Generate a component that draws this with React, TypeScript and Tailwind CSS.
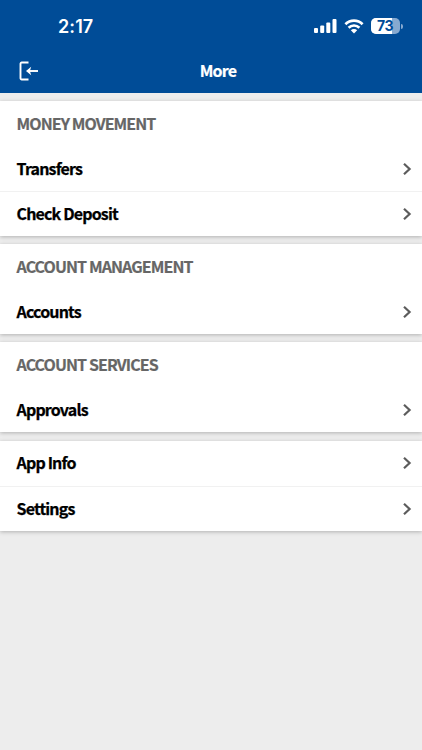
import React from 'react';

interface MenuSection {
  title?: string;
  items: string[];
}

const sections: MenuSection[] = [
  { title: 'MONEY MOVEMENT', items: ['Transfers', 'Check Deposit'] },
  { title: 'ACCOUNT MANAGEMENT', items: ['Accounts'] },
  { title: 'ACCOUNT SERVICES', items: ['Approvals'] },
  { items: ['App Info', 'Settings'] },
];

function StatusBar() {
  return (
    <div className="flex h-[52px] items-center justify-between pl-[58px] pr-[19px] font-['Inter',sans-serif] text-white">
      <span className="pt-px text-[18px] font-semibold leading-none tracking-[0.1px]">2:17</span>
      <div className="flex items-center">
        {/* Signal */}
        <svg width="23" height="14" viewBox="0 0 23 14" fill="currentColor">
          <rect x="0" y="9" width="4" height="5" rx="1" />
          <rect x="6.2" y="6.5" width="4" height="7.5" rx="1" />
          <rect x="12.3" y="3.5" width="4" height="10.5" rx="1" />
          <rect x="18.5" y="0" width="4" height="14" rx="1" />
        </svg>
        {/* Wi-Fi */}
        <svg className="ml-[7px]" width="20" height="15" viewBox="0 0 20 15" fill="none" stroke="currentColor" strokeWidth="2.7">
          <path d="M1.4 5.2a12.3 12.3 0 0 1 17.2 0" />
          <path d="M4.6 8.7a7.7 7.7 0 0 1 10.8 0" />
          <path d="M10 14.4 6.8 11.3a4.5 4.5 0 0 1 6.4 0z" fill="currentColor" stroke="none" />
        </svg>
        {/* Battery */}
        <div className="relative ml-[7px] flex h-[16px] w-[29px] items-center justify-center overflow-hidden rounded-[5px] bg-[#86a9d0]">
          <div className="absolute inset-y-0 left-0 w-[21px] bg-white" />
          <span className="relative pr-px text-[14px] font-bold leading-none tracking-[-0.4px] text-[#004c97]">73</span>
        </div>
        <div className="ml-px h-[5px] w-[2px] rounded-r-full bg-[#86a9d0]" />
      </div>
    </div>
  );
}

function Header() {
  return (
    <header className="h-[93px] bg-[#004c97] text-white">
      <StatusBar />
      <div className="grid h-[36px] grid-cols-[1fr_auto_1fr] items-center pl-[19px] pr-[5px]">
        <button aria-label="Log out" className="w-[20px] pt-px">
          <svg width="20" height="20" viewBox="0 0 20 20" fill="none" stroke="currentColor" strokeWidth="1.9">
            <path d="M9.5 1.5H2.7a1.2 1.2 0 0 0-1.2 1.2v14.6a1.2 1.2 0 0 0 1.2 1.2h6.8" />
            <path d="M19 10H9" />
            <path d="M12.2 5.8 7 10l5.2 4.2-1.3-4.2z" fill="currentColor" stroke="none" />
          </svg>
        </button>
        <h1 className="text-[16px] font-bold leading-none tracking-[-0.75px] [-webkit-text-stroke:0.2px]">More</h1>
      </div>
    </header>
  );
}

function MenuRow({ label, divided }: { label: string; divided: boolean }) {
  return (
    <a
      className={`flex h-[45px] items-center justify-between pl-[16.5px] pr-[9px] text-[16px] font-bold leading-none tracking-[-0.84px] text-black ${
        divided ? 'border-t border-[#f1f1f1]' : ''
      }`}
    >
      <span className="pb-[2px] [-webkit-text-stroke:0.25px]">{label}</span>
      <svg width="11" height="14" viewBox="0 0 11 14" fill="none" stroke="#5c5c5c" strokeWidth="2.2">
        <path d="M2 1.7 7.6 7 2 12.3" />
      </svg>
    </a>
  );
}

export default function App() {
  return (
    <div className="min-h-screen bg-[#ededed] font-['Noto_Sans_CJK_SC',sans-serif]">
      <Header />
      <main className="flex flex-col gap-[8.2px] pt-[8px]">
        {sections.map((section) => (
          <section key={section.items[0]} className="bg-white shadow-[0_1px_4px_rgba(0,0,0,0.25)]">
            {section.title && (
              <h2 className="flex h-[45px] items-center pb-[2px] pl-[16.5px] text-[16px] font-bold leading-none tracking-[-0.91px] text-[#666] [-webkit-text-stroke:0.2px]">
                {section.title}
              </h2>
            )}
            {section.items.map((item, index) => (
              <MenuRow key={item} label={item} divided={index > 0} />
            ))}
          </section>
        ))}
      </main>
    </div>
  );
}
